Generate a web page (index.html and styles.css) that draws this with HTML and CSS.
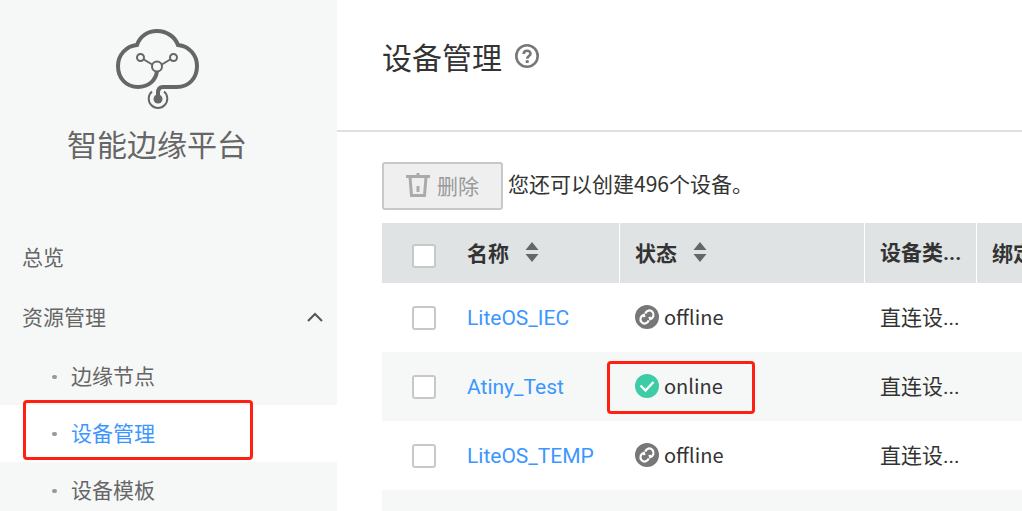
FILE: index.html
```html
<!DOCTYPE html>
<html lang="zh-CN">
<head>
<meta charset="utf-8">
<meta name="viewport" content="width=device-width, initial-scale=1">
<title>设备管理</title>
<link rel="stylesheet" href="styles.css">
</head>
<body>
<svg class="defs" aria-hidden="true">
  <symbol id="offline" viewBox="0 0 24 24">
    <circle cx="12" cy="12" r="12" fill="#777"/>
    <g fill="none" stroke="#fff" stroke-width="2.200">
      <path d="M10.200 8.600 C11.500 5.200 15.200 4.600 17.300 6.700 C19.600 9.200 18.600 13 15.200 14.200 L14.400 11.800"/>
      <path d="M13.800 15.400 C12.500 18.800 8.800 19.400 6.700 17.300 C4.400 14.800 5.400 11 8.800 9.800 L9.600 12.200"/>
    </g>
  </symbol>
  <symbol id="sort" viewBox="0 0 14 22">
    <path d="M7 1 L13.500 9 H.5Z M7 21 L13.500 13 H.5Z" fill="#666"/>
  </symbol>
</svg>
<div class="layout">
  <aside class="sidebar">
    <div class="brand">
      <svg class="brand-logo" viewBox="0 0 84 84" aria-hidden="true">
        <g fill="none" stroke="#666">
          <path stroke-width="4" d="M42 44 C41 53 34 60 23 60 C11 60 3 51 3 39 C3 28 11 19 22 18 C25 9 33 4 42 4 C52 4 60 10 63 18 C74 19 82 28 82 39 C82 51 74 60 62 60 H48 Q43 60 43 66 V70"/>
        </g>
        <g fill="none" stroke="#666" stroke-width="2">
          <path d="M28 32 L38 38 M56 32 L46 38"/>
          <circle cx="25.500" cy="30.500" r="3.500"/>
          <circle cx="58.500" cy="30.500" r="3.500"/>
          <circle cx="42" cy="39.500" r="5" fill="#f6f8f8"/>
          <path d="M37 64.500 A9.300 9.300 0 1 0 49 64.500"/>
        </g>
        <circle cx="43" cy="72" r="4.500" fill="#666"/>
      </svg>
      <div class="brand-name">智能边缘平台</div>
    </div>
    <nav class="menu">
      <a class="menu-item" href="#overview">总览</a>
      <a class="menu-item" href="#resources">资源管理
        <svg class="chevron" viewBox="0 0 16 12" aria-hidden="true"><path d="M1 11 L8 4 L15 11" fill="none" stroke="#555" stroke-width="2"/></svg>
      </a>
      <ul class="submenu">
        <li><a class="sub-item" href="#nodes">边缘节点</a></li>
        <li><a class="sub-item active" href="#devices">设备管理</a><span class="mark mark-menu"></span></li>
        <li><a class="sub-item" href="#templates">设备模板</a></li>
      </ul>
    </nav>
  </aside>
  <main class="main">
    <header class="page-head">
      <h1 class="page-title">设备管理</h1>
      <svg class="help" viewBox="0 0 24 24" aria-hidden="true">
        <circle cx="12" cy="12" r="10.700" fill="none" stroke="#777" stroke-width="2.600"/>
        <path d="M8.700 10 C8.700 5.700 15.500 5.700 15.500 9.700 C15.500 12 12.200 12 12.200 14.700" fill="none" stroke="#777" stroke-width="2.600"/>
        <rect x="10.700" y="16.200" width="3" height="2.800" fill="#777"/>
      </svg>
    </header>
    <section class="content">
      <div class="toolbar">
        <button class="delete" type="button" disabled>
          <svg class="trash" viewBox="0 0 24 26" aria-hidden="true">
            <path d="M0 4.500 H24 M12 1 V4" fill="none" stroke="#aaa" stroke-width="3"/>
            <path d="M4 5 L5.500 23.500 H18.500 L20 5" fill="none" stroke="#aaa" stroke-width="3"/>
            <path d="M12 14 V20" stroke="#aaa" stroke-width="3"/>
          </svg>
          删除
        </button>
        <span class="quota">您还可以创建496个设备。</span>
      </div>
      <table class="devices">
        <colgroup><col class="col-check"><col class="col-name"><col class="col-state"><col class="col-type"><col></colgroup>
        <thead>
          <tr>
            <th class="check-cell"><input class="check" type="checkbox" aria-label="全选"></th>
            <th class="lined name"><span class="sortable">名称<svg class="sort" aria-hidden="true"><use href="#sort"/></svg></span></th>
            <th class="lined"><span class="sortable">状态<svg class="sort" aria-hidden="true"><use href="#sort"/></svg></span></th>
            <th class="lined type">设备类...</th>
            <th>绑定</th>
          </tr>
        </thead>
        <tbody>
          <tr>
            <td class="check-cell"><input class="check" type="checkbox" aria-label="LiteOS_IEC"></td>
            <td class="name"><a class="device" href="#LiteOS_IEC">LiteOS_IEC</a></td>
            <td><span class="state"><svg class="state-icon" aria-hidden="true"><use href="#offline"/></svg>offline</span></td>
            <td class="type">直连设...</td>
            <td></td>
          </tr>
          <tr>
            <td class="check-cell"><input class="check" type="checkbox" aria-label="Atiny_Test"></td>
            <td class="name"><a class="device" href="#Atiny_Test">Atiny_Test</a></td>
            <td class="marked"><span class="state"><svg class="state-icon" viewBox="0 0 24 24" aria-hidden="true"><circle cx="12" cy="12" r="12" fill="#3dcca6"/><path d="M5.500 11.500 L10.500 16.500 L18.500 8" fill="none" stroke="#fff" stroke-width="2.400"/></svg>online</span><span class="mark mark-state"></span></td>
            <td class="type">直连设...</td>
            <td></td>
          </tr>
          <tr>
            <td class="check-cell"><input class="check" type="checkbox" aria-label="LiteOS_TEMP"></td>
            <td class="name"><a class="device" href="#LiteOS_TEMP">LiteOS_TEMP</a></td>
            <td><span class="state"><svg class="state-icon" aria-hidden="true"><use href="#offline"/></svg>offline</span></td>
            <td class="type">直连设...</td>
            <td></td>
          </tr>
          <tr><td colspan="5"></td></tr>
        </tbody>
      </table>
    </section>
  </main>
</div>
</body>
</html>
```
FILE: styles.css
```css
* { box-sizing: border-box; }

body {
  margin: 0;
  background: #fff;
  color: #333;
  font: 21px/30px "Noto Sans CJK SC", sans-serif;
  overflow: hidden;
}

a { text-decoration: none; color: inherit; }

.defs { display: none; }

.layout {
  display: flex;
  height: 100vh;
  overflow: hidden;
}

.sidebar {
  flex: 0 0 337px;
  background: #f6f8f8;
  color: #666;
}

.brand {
  display: flex;
  flex-direction: column;
  align-items: center;
  gap: 12px;
  padding: 27px 23px 64px 0;
}

.brand-logo { width: 84px; height: 84px; }

.brand-name { font-size: 30px; line-height: 40px; }

.menu-item {
  display: flex;
  align-items: center;
  justify-content: space-between;
  height: 60px;
  padding: 0 14px 2px 22px;
}

.chevron { width: 16px; height: 12px; }

.submenu {
  margin: 0;
  padding: 1px 0 0;
  list-style: none;
}

.submenu li { position: relative; }

.sub-item {
  display: flex;
  align-items: center;
  gap: 14px;
  height: 57px;
  padding: 0 0 3px 52px;
}

.sub-item::before {
  content: "";
  width: 5px;
  height: 4px;
  margin-top: 4px;
  border-radius: 2px;
  background: #999;
}

.active { background: #fff; color: #3c96ff; }

.mark {
  position: absolute;
  border: 3px solid #ff2012;
  border-radius: 4px;
  pointer-events: none;
}

.mark-menu { left: 23px; top: -5px; width: 230px; height: 60px; }

.mark-state { left: -13px; top: 9px; width: 148px; height: 53px; }

.main {
  flex: 1;
  min-width: 0;
}

.page-head {
  display: flex;
  align-items: center;
  gap: 13px;
  height: 132px;
  padding: 0 45px 18px;
  border-bottom: 2px solid #dfe1e1;
}

.page-title {
  margin: 0;
  font-size: 30px;
  line-height: 40px;
  font-weight: 400;
}

.help { width: 24px; height: 24px; }

.content { padding: 30px 0 0 45px; }

.toolbar {
  display: flex;
  align-items: center;
  gap: 5px;
  margin-bottom: 13px;
}

.delete {
  display: flex;
  align-items: center;
  gap: 7px;
  height: 48px;
  padding: 0 22px 2px;
  border: 2px solid #c8c8c8;
  border-radius: 3px;
  background: #efefef;
  color: #999;
  font: inherit;
}

.quota { padding-bottom: 6px; }

.trash { width: 24px; height: 26px; }

.devices {
  width: 100%;
  table-layout: fixed;
  border-collapse: separate;
  border-spacing: 0;
}

.col-check { width: 69px; }
.col-name { width: 169px; }
.col-state { width: 245px; }
.col-type { width: 112px; }

th, td {
  padding: 0 0 2px 15px;
  text-align: left;
  vertical-align: middle;
  white-space: nowrap;
}

th {
  height: 60px;
  background: #dfe3e4;
  font-weight: 700;
}

td { height: 69px; }

.lined { border-right: 1px solid #fff; }

.name { padding-left: 16px; }

.type { padding-bottom: 0; font-family: Roboto, "Noto Sans CJK SC", sans-serif; }

tbody tr:nth-child(even) { background: #f6f8f8; }

.check-cell { padding: 0 0 0 30px; }

th.check-cell { padding-top: 6px; }

.check {
  display: block;
  appearance: none;
  width: 24px;
  height: 24px;
  margin: 0;
  border: 2px solid #c8c8c8;
  border-radius: 3px;
  background: #fff;
}

.sortable {
  display: flex;
  align-items: center;
  gap: 16px;
}

.sort { width: 14px; height: 22px; }

.device { color: #3c96ff; font-family: Roboto, sans-serif; }

.state {
  display: flex;
  align-items: center;
  gap: 5px;
  font-size: 20px;
}

.state-icon { width: 24px; height: 24px; }

.marked { position: relative; }
```
